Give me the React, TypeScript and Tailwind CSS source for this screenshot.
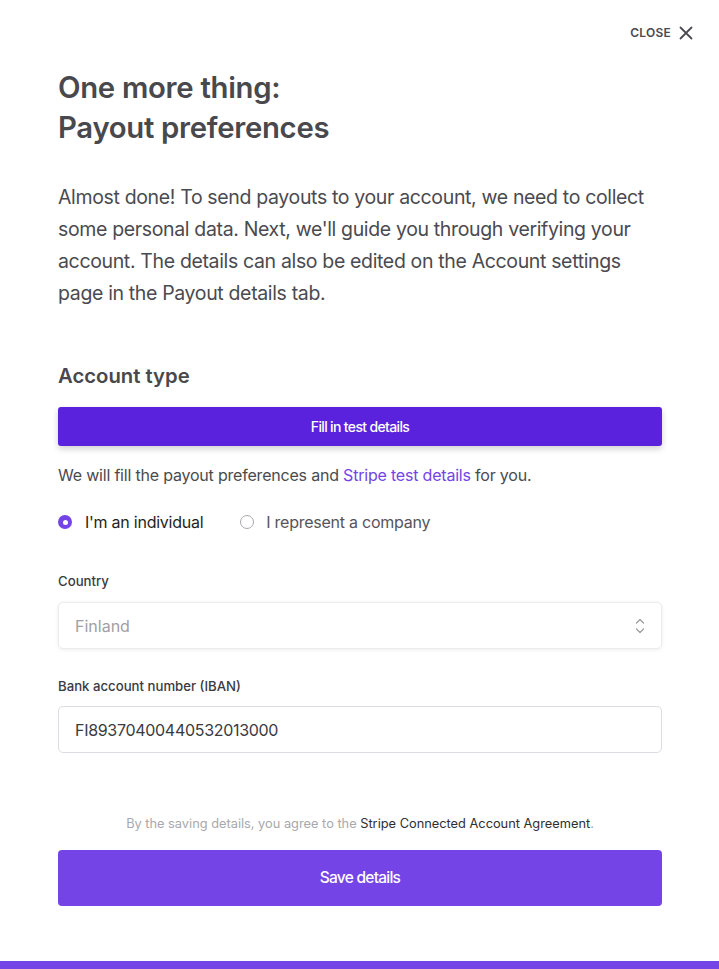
import React from "react";

export default function App() {
  return (
    <div className="relative w-[719px] h-[969px] bg-white overflow-hidden" style={{ fontFamily: "Inter, 'Noto Sans', sans-serif" }}>
      <div className="flex justify-end pt-[24px] pr-[26px]">
        <button className="flex items-center gap-[8px] text-[12px] font-semibold tracking-[0.02em] text-[#4a4a50]">
          CLOSE
          <svg width="14" height="14" viewBox="0 0 14 14" fill="none" stroke="#4a4a50" strokeWidth="1.8" strokeLinecap="round">
            <path d="M1.5 1.5L12.5 12.5M12.5 1.5L1.5 12.5" />
          </svg>
        </button>
      </div>
      <div className="px-[58px] pr-[57px]">
        <h1 className="mt-[26px] text-[29.3px] leading-[40px] font-semibold text-[#48484d] tracking-[-0.01em]">
          One more thing:<br />Payout preferences
        </h1>
        <p className="mt-[33px] text-[19.5px] leading-[32px] tracking-[-0.35px] text-[#4a4a50]">
          Almost done! To send payouts to your account, we need to collect some personal data. Next, we'll guide you through verifying your account. The details can also be edited on the Account settings page in the Payout details tab.
        </p>
        <h2 className="mt-[52px] text-[20.3px] leading-[30px] font-semibold text-[#48484d]">Account type</h2>
        <button className="mt-[16px] w-full h-[39px] rounded-[3px] bg-[#5a22dc] text-white text-[14px] tracking-[-0.65px] font-medium shadow-[0_3px_6px_rgba(0,0,0,0.18)]">
          Fill in test details
        </button>
        <p className="mt-[17px] text-[16px] leading-[24px] tracking-[-0.2px] text-[#4a4a50]">
          We will fill the payout preferences and <span className="text-[#7444e6]">Stripe test details</span> for you.
        </p>
        <div className="mt-[23px] flex items-center h-[24px] text-[16px] tracking-[-0.25px]">
          <span className="w-[14px] h-[14px] rounded-full bg-[#7444e6] flex items-center justify-center">
            <span className="w-[5px] h-[5px] rounded-full bg-white" />
          </span>
          <span className="ml-[13px] text-[#1f1f22]">I'm an individual</span>
          <span className="ml-[37px] w-[14px] h-[14px] rounded-full border-[1.5px] border-[#a8a8ae]" />
          <span className="ml-[12px] text-[#55555b]">I represent a company</span>
        </div>
        <label className="block mt-[37px] text-[13.2px] leading-[20px] font-medium text-[#3a3a3f]">Country</label>
        <div className="mt-[11px] h-[47px] rounded-[5px] border border-[#ebebf0] shadow-[0_1px_4px_rgba(0,0,0,0.07)] flex items-center justify-between pl-[16px] pr-[16px]">
          <span className="text-[16px] text-[#a0a0a6]">Finland</span>
          <svg width="10" height="18" viewBox="0 0 10 18" fill="none" stroke="#9a9aa0" strokeWidth="1.2" strokeLinecap="round" strokeLinejoin="round">
            <path d="M1.5 6L5 2.5L8.5 6M1.5 12L5 15.5L8.5 12" />
          </svg>
        </div>
        <label className="block mt-[27px] text-[13.2px] leading-[20px] font-medium text-[#3a3a3f]">Bank account number (IBAN)</label>
        <div className="mt-[10px] h-[47px] rounded-[5px] border border-[#dcdce2] flex items-center pl-[16px]">
          <span className="text-[16px] tracking-[-0.3px] text-[#3a3a3f]">FI89370400440532013000</span>
        </div>
        <p className="mt-[61px] text-center text-[12.8px] leading-[20px] text-[#a8a8ae]">
          By the saving details, you agree to the <span className="text-[#2e2e33]">Stripe Connected Account Agreement</span>.
        </p>
        <button className="mt-[16px] w-full h-[56px] rounded-[4px] bg-[#7444e6] text-white text-[15.5px] tracking-[-0.75px] font-medium">
          Save details
        </button>
      </div>
      <div className="absolute left-0 right-0 bottom-0 h-[8px] bg-[#7444e6]" />
    </div>
  );
}
